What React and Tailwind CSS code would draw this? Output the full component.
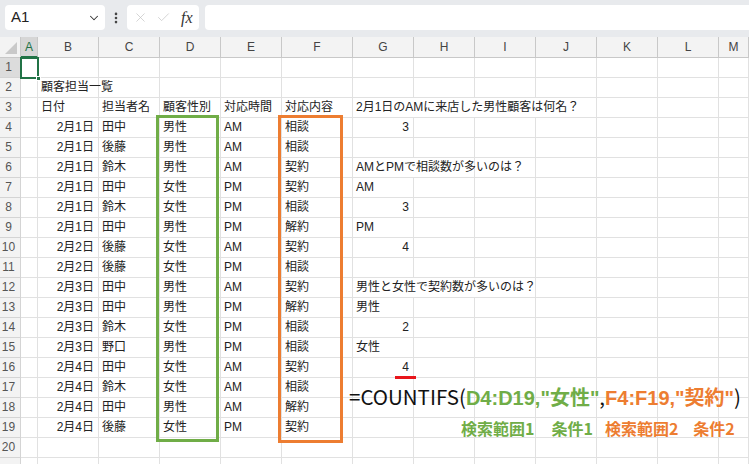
import { ChevronDown, EllipsisVertical, X, Check } from 'lucide-react'

const LETTERS = ['A', 'B', 'C', 'D', 'E', 'F', 'G', 'H', 'I', 'J', 'K', 'L', 'M']

const DATA = [
  ['2月1日', '田中', '男性', 'AM', '相談', { t: '3', right: true }],
  ['2月1日', '後藤', '男性', 'AM', '相談', null],
  ['2月1日', '鈴木', '男性', 'AM', '契約', { t: 'AMとPMで相談数が多いのは？', span: 2 }],
  ['2月1日', '田中', '女性', 'PM', '契約', { t: 'AM' }],
  ['2月1日', '鈴木', '女性', 'PM', '相談', { t: '3', right: true }],
  ['2月1日', '田中', '男性', 'PM', '解約', { t: 'PM' }],
  ['2月2日', '後藤', '女性', 'AM', '契約', { t: '4', right: true }],
  ['2月2日', '後藤', '女性', 'PM', '相談', null],
  ['2月3日', '田中', '男性', 'AM', '契約', { t: '男性と女性で契約数が多いのは？', span: 3 }],
  ['2月3日', '田中', '男性', 'PM', '解約', { t: '男性' }],
  ['2月3日', '鈴木', '女性', 'PM', '相談', { t: '2', right: true }],
  ['2月3日', '野口', '男性', 'PM', '相談', { t: '女性' }],
  ['2月4日', '田中', '女性', 'AM', '契約', { t: '4', right: true }],
  ['2月4日', '鈴木', '女性', 'AM', '相談', null],
  ['2月4日', '田中', '男性', 'AM', '解約', null],
  ['2月4日', '後藤', '女性', 'PM', '契約', null],
]

const SPAN = { 1: '', 2: 'col-span-2', 3: 'col-span-3', 4: 'col-span-4' }

const boldFont = { fontFamily: '"Liberation Sans", "Noto Sans CJK JP", sans-serif' }

function Cell({ children, className = '' }) {
  return (
    <div className={`h-5 border-r border-b border-[#e1e1e1] px-[3px] leading-[19px] whitespace-nowrap ${className}`}>
      {children}
    </div>
  )
}

function RowHead({ n, active }) {
  return (
    <div
      className={`h-5 border-r border-b border-[#d4d4d4] pr-[3px] text-center text-[12px] leading-[19px] ${
        active ? 'bg-[#dcdcdc] text-[#555]' : 'bg-[#f3f3f3] text-[#555]'
      }`}
      style={{ fontFamily: '"Liberation Sans", sans-serif' }}
    >
      {n}
    </div>
  )
}

function emptyCells(count, key) {
  return Array.from({ length: count }, (_, i) => <Cell key={`${key}-${i}`} />)
}

function App() {
  const rows = []

  // row 1, 2
  rows.push(<RowHead key="h1" n={1} active />, ...emptyCells(13, 'r1'))
  rows.push(<RowHead key="h2" n={2} />, <Cell key="r2a" />, <Cell key="r2b">顧客担当一覧</Cell>, ...emptyCells(11, 'r2'))

  // row 3 headings
  rows.push(
    <RowHead key="h3" n={3} />,
    <Cell key="r3a" />,
    <Cell key="r3b">日付</Cell>,
    <Cell key="r3c">担当者名</Cell>,
    <Cell key="r3d">顧客性別</Cell>,
    <Cell key="r3e">対応時間</Cell>,
    <Cell key="r3f">対応内容</Cell>,
    <Cell key="r3g" className="col-span-4">2月1日のAMに来店した男性顧客は何名？</Cell>,
    ...emptyCells(3, 'r3')
  )

  DATA.forEach((r, i) => {
    const n = i + 4
    const g = r[5]
    const span = g && g.span ? g.span : 1
    rows.push(
      <RowHead key={`h${n}`} n={n} />,
      <Cell key={`r${n}a`} />,
      <Cell key={`r${n}b`} className="text-right pr-[4px]">{r[0]}</Cell>,
      <Cell key={`r${n}c`}>{r[1]}</Cell>,
      <Cell key={`r${n}d`}>{r[2]}</Cell>,
      <Cell key={`r${n}e`}>{r[3]}</Cell>,
      <Cell key={`r${n}f`}>{r[4]}</Cell>,
      <Cell key={`r${n}g`} className={`${SPAN[span]} ${g && g.right ? 'text-right pr-[4px]' : ''}`}>
        {g ? g.t : ''}
      </Cell>,
      ...emptyCells(7 - span, `r${n}`)
    )
  })

  rows.push(<RowHead key="h20" n={20} />, ...emptyCells(13, 'r20'))
  rows.push(<div key="h21" className="h-[6px] border-r border-[#d4d4d4] bg-[#f3f3f3]" />, ...emptyCells(13, 'r21'))

  return (
    <div className="relative h-[464px] w-[749px] overflow-hidden bg-white text-[#222]">
      {/* formula bar */}
      <div className="flex h-[37px] items-start bg-[#e8eaed] pt-[5px] pl-[5px]">
        <div
          className="flex h-[25px] w-[100px] items-center justify-between rounded-[4px] bg-white pl-[6px] pr-[4px] text-[15px] text-[#222]"
          style={{ fontFamily: '"Liberation Sans", sans-serif' }}
        >
          <span>A1</span>
          <ChevronDown size={14} strokeWidth={1.75} className="text-[#333]" />
        </div>
        <div className="flex h-[25px] w-[22px] items-center justify-center">
          <EllipsisVertical size={14} strokeWidth={2.5} className="text-[#444]" />
        </div>
        <div className="flex h-[25px] w-[72px] items-center rounded-[4px] bg-white pl-[6px]">
          <X size={15} strokeWidth={1.1} className="text-[#c2c2c2]" />
          <Check size={15} strokeWidth={1.1} className="ml-[8px] text-[#c2c2c2]" />
          <span
            className="ml-[10px] text-[16px] italic text-[#333]"
            style={{ fontFamily: '"Liberation Serif", serif' }}
          >
            fx
          </span>
        </div>
        <div className="ml-[6px] h-[25px] flex-1 rounded-l-[4px] bg-white" />
      </div>

      {/* sheet grid */}
      <div
        className="grid grid-cols-[21px_17px_61px_61px_61px_61px_71px_61px_61px_61px_61px_61px_61px_1fr] text-[12px]"
        style={{ fontFamily: '"Liberation Sans", "Noto Sans CJK JP", sans-serif' }}
      >
        <div className="relative h-[21px] border-r border-b border-[#c8c8c8] bg-[#f3f3f3]">
          <svg className="absolute right-[3px] bottom-[3px]" width="12" height="12" viewBox="0 0 12 12">
            <polygon points="12,0 12,12 0,12" fill="#c9c9c9" />
          </svg>
        </div>
        {LETTERS.map((l) => (
          <div
            key={l}
            className={`h-[21px] border-r border-b text-center text-[12px] leading-[20px] ${
              l === 'A'
                ? 'border-b-2 border-r-[#c8c8c8] border-b-[#217346] bg-[#d6d6d6] text-[#217346]'
                : 'border-[#c8c8c8] bg-[#f3f3f3] text-[#444]'
            }`}
            style={{ fontFamily: '"Liberation Sans", sans-serif' }}
          >
            {l}
          </div>
        ))}
        {rows}
      </div>

      {/* selected cell A1 */}
      <div className="absolute left-[20px] top-[57px] h-[22px] w-[19px] border-2 border-[#217346]">
        <div className="absolute -right-[4px] -bottom-[4px] h-[5px] w-[5px] border border-white bg-[#217346]" />
      </div>

      {/* range highlights */}
      <div className="absolute left-[156px] top-[115px] h-[327px] w-[63px] border-[3px] border-[#70ad47]" />
      <div className="absolute left-[278px] top-[115px] h-[328px] w-[65px] border-[3px] border-[#ed7d31]" />

      {/* red underline */}
      <div className="absolute left-[395px] top-[376px] h-[3px] w-[21px] bg-[#e8151b]" />

      {/* formula annotation */}
      <div
        className="absolute left-[349px] top-[381px] whitespace-nowrap text-[20.5px] leading-[30px] text-[#111]"
        style={{ fontFamily: '"Noto Sans CJK JP", sans-serif' }}
      >
        =COUNTIFS(
        <span className="text-[20px] font-bold text-[#70ad47]" style={boldFont}>D4:D19,"女性"</span>,
        <span className="text-[20px] font-bold text-[#ed7d31]" style={boldFont}>F4:F19,"契約"</span>)
      </div>
      <div
        className="absolute left-[461px] top-[417px] flex whitespace-nowrap text-[16px] font-bold leading-[22px]"
        style={{ fontFamily: '"Noto Sans CJK JP", sans-serif' }}
      >
        <span className="text-[#70ad47]">検索範囲1</span>
        <span className="ml-[17px] text-[#70ad47]">条件1</span>
        <span className="ml-[12px] text-[#ed7d31]">検索範囲2</span>
        <span className="ml-[15px] text-[#ed7d31]">条件2</span>
      </div>
    </div>
  )
}

export default App
